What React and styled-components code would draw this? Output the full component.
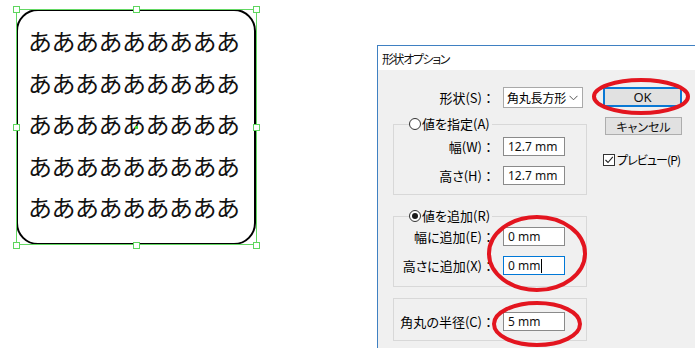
import React from 'react';
import styled, { createGlobalStyle } from 'styled-components';

const GlobalStyle = createGlobalStyle`
  html, body {
    margin: 0;
    padding: 0;
    background: #fff;
    overflow: hidden;
  }
`;

const Page = styled.div`
  display: flex;
  align-items: flex-start;
  width: 695px;
  height: 348px;
  overflow: hidden;
  font-family: "Noto Sans CJK JP", sans-serif;
  color: #000;
`;

const Canvas = styled.div`
  flex-shrink: 0;
  width: 377px;
  padding: 9px 0 0 16px;
  box-sizing: border-box;
`;

const ShapeFrame = styled.div`
  position: relative;
  width: 240px;
  height: 236px;
`;

const RoundRect = styled.div`
  box-sizing: border-box;
  width: 100%;
  height: 100%;
  border: 2px solid #000;
  border-radius: 22px;
  padding: 9px 0 0 10px;
  font-size: 24px;
  line-height: 41.6px;
  letter-spacing: -0.5px;
  color: #111;
`;

const TextLine = styled.div`
  white-space: nowrap;
`;

const Selection = styled.div`
  position: absolute;
  inset: 0 -1px 0 0;
  border: 1px solid #63d863;
  pointer-events: none;
`;

const Handle = styled.span`
  position: absolute;
  left: calc(${p => p.$x}% - 3px);
  top: calc(${p => p.$y}% - 3px);
  width: 5px;
  height: 5px;
  background: #fff;
  border: 1px solid #5dd65d;
`;

const CenterDot = styled.span`
  position: absolute;
  left: calc(50% - 1px);
  top: calc(50% - 1px);
  width: 3px;
  height: 3px;
  background: #3ed43e;
`;

const Dialog = styled.div`
  position: relative;
  flex: 1;
  margin-top: 45px;
  height: 320px;
  border-top: 1px solid #3f80c2;
  border-left: 1px solid #3f80c2;
  background: #f0f0f0;
  font-size: 13px;
  font-feature-settings: "palt";
`;

const TitleBar = styled.div`
  height: 24px;
  box-sizing: border-box;
  padding: 4px 0 0 4px;
  background: #fff;
  font-size: 12px;
  letter-spacing: -1.4px;
  line-height: 18px;
  color: #111;
`;

const Body = styled.div`
  display: grid;
  grid-template-columns: 194px 79px;
  column-gap: 16px;
  padding: 17px 0 0 15px;
`;

const Column = styled.div`
  display: flex;
  flex-direction: column;
`;

const FieldRow = styled.div`
  display: grid;
  grid-template-columns: ${p => p.$label || 101}px ${p => p.$field || 62}px;
  column-gap: 8px;
  align-items: center;
  height: ${p => p.$h || 19}px;
`;

const Label = styled.span`
  text-align: right;
  white-space: nowrap;
  line-height: 16px;
`;

const Colon = styled.span`
  font-feature-settings: normal;
`;

const Select = styled.div`
  display: flex;
  align-items: center;
  justify-content: space-between;
  height: 21px;
  box-sizing: border-box;
  border: 1px solid #a9a9a9;
  background: #fff;
  padding: 0 4px 0 3px;
  font-size: 12px;
  letter-spacing: -0.2px;
  line-height: 16px;
  white-space: nowrap;
  font-feature-settings: normal;
`;

const Group = styled.fieldset`
  margin: ${p => p.$mt}px 0 0;
  padding: ${p => p.$pt}px 0 ${p => p.$pb}px;
  min-inline-size: 0;
  border: 1px solid #d8d8d8;
  display: flex;
  flex-direction: column;
  gap: 10px;
`;

const Legend = styled.legend`
  display: flex;
  align-items: center;
  gap: 1px;
  margin-left: 15px;
  padding: 0 2px 0 0;
  height: 14px;
  line-height: 14px;
`;

const Radio = styled.span`
  display: inline-flex;
  align-items: center;
  justify-content: center;
  width: 12px;
  height: 12px;
  box-sizing: border-box;
  border: 1px solid #333;
  border-radius: 50%;
  background: #fff;

  &::after {
    content: '';
    display: ${p => (p.$checked ? 'block' : 'none')};
    width: 6px;
    height: 6px;
    border-radius: 50%;
    background: #1b1b1b;
  }
`;

const Field = styled.div`
  height: 19px;
  box-sizing: border-box;
  border: 1px solid ${p => (p.$focused ? '#0078d7' : '#8a8a8a')};
  background: #fff;
  padding-left: 4px;
  font-family: "Noto Sans", sans-serif;
  font-size: 12px;
  line-height: 17px;
  color: #111;
  display: flex;
  align-items: center;
  white-space: nowrap;
`;

const Caret = styled.span`
  display: inline-block;
  width: 1px;
  height: 14px;
  background: #000;
  margin-left: 1px;
`;

const Button = styled.div`
  justify-self: end;
  align-self: end;
  width: ${p => p.$w}px;
  height: ${p => p.$h}px;
  box-sizing: border-box;
  display: flex;
  align-items: center;
  justify-content: center;
  background: #e1e1e1;
  border: ${p => (p.$primary ? '2px solid #0a78d4' : '1px solid #adadad')};
  font-size: ${p => (p.$primary ? '13px' : '12px')};
  font-family: ${p => (p.$primary ? '"Noto Sans", sans-serif' : 'inherit')};
  color: #111;
  margin-top: ${p => p.$mt || 0}px;
`;

const CheckRow = styled.div`
  display: flex;
  align-items: center;
  gap: 2px;
  margin-top: 18px;
  height: 13px;
  line-height: 13px;
  font-size: 12px;
  letter-spacing: -0.9px;
  white-space: nowrap;
`;

const CheckBox = styled.span`
  display: inline-flex;
  width: 12px;
  height: 12px;
  box-sizing: border-box;
  border: 1px solid #333;
  background: #fff;
`;

const Mark = styled.svg`
  position: absolute;
  left: ${p => p.$x}px;
  top: ${p => p.$y}px;
  pointer-events: none;
  overflow: visible;
`;

const RedEllipse = ({ x, y, w, h }) => (
  <Mark $x={x} $y={y} width={w} height={h}>
    <ellipse
      cx={w / 2}
      cy={h / 2}
      rx={w / 2 - 2}
      ry={h / 2 - 2}
      fill="none"
      stroke="#e3151f"
      strokeWidth="4"
    />
  </Mark>
);

const rows = Array.from({ length: 5 }, () => 'あああああああああ');
const handles = [
  [0, 0], [50, 0], [100, 0],
  [0, 50], [100, 50],
  [0, 100], [50, 100], [100, 100],
];

const App = () => (
  <Page>
    <GlobalStyle />
    <Canvas>
      <ShapeFrame>
        <RoundRect>
          {rows.map((r, i) => <TextLine key={i}>{r}</TextLine>)}
        </RoundRect>
        <Selection />
        {handles.map(([x, y]) => <Handle key={`${x}-${y}`} $x={x} $y={y} />)}
        <CenterDot />
      </ShapeFrame>
    </Canvas>

    <Dialog>
      <TitleBar>形状オプション</TitleBar>
      <Body>
        <Column>
          <FieldRow $label={102} $field={80} $h={21}>
            <Label>形状(S)<Colon>：</Colon></Label>
            <Select>
              <span>角丸長方形</span>
              <svg width="9" height="6" viewBox="0 0 9 6">
                <path d="M0.5 0.8 L4.5 4.8 L8.5 0.8" fill="none" stroke="#555" strokeWidth="1" />
              </svg>
            </Select>
          </FieldRow>

          <Group $mt={9} $pt={6} $pb={9}>
            <Legend><Radio />値を指定(A)</Legend>
            <FieldRow>
              <Label>幅(W)<Colon>：</Colon></Label>
              <Field>12.7 mm</Field>
            </FieldRow>
            <FieldRow>
              <Label>高さ(H)<Colon>：</Colon></Label>
              <Field>12.7 mm</Field>
            </FieldRow>
          </Group>

          <Group $mt={14} $pt={4} $pb={11}>
            <Legend><Radio $checked />値を追加(R)</Legend>
            <FieldRow>
              <Label>幅に追加(E)<Colon>：</Colon></Label>
              <Field>0 mm</Field>
            </FieldRow>
            <FieldRow>
              <Label>高さに追加(X)<Colon>：</Colon></Label>
              <Field $focused>0 mm<Caret /></Field>
            </FieldRow>
          </Group>

          <Group $mt={11} $pt={13} $pb={9}>
            <FieldRow>
              <Label>角丸の半径(C)<Colon>：</Colon></Label>
              <Field>5 mm</Field>
            </FieldRow>
          </Group>
        </Column>

        <Column>
          <Button $primary $w={79} $h={20}>OK</Button>
          <Button $w={77} $h={18} $mt={10}>キャンセル</Button>
          <CheckRow>
            <CheckBox>
              <svg width="10" height="10" viewBox="0 0 10 10">
                <path d="M1.5 5 L4 7.5 L8.8 1.8" fill="none" stroke="#222" strokeWidth="1.1" />
              </svg>
            </CheckBox>
            プレビュー(P)
          </CheckRow>
        </Column>
      </Body>

      <RedEllipse x={214} y={32} w={98} h={37} />
      <RedEllipse x={109} y={169} w={100} h={77} />
      <RedEllipse x={114} y={255} w={90} h={46} />
    </Dialog>
  </Page>
);

export default App;
